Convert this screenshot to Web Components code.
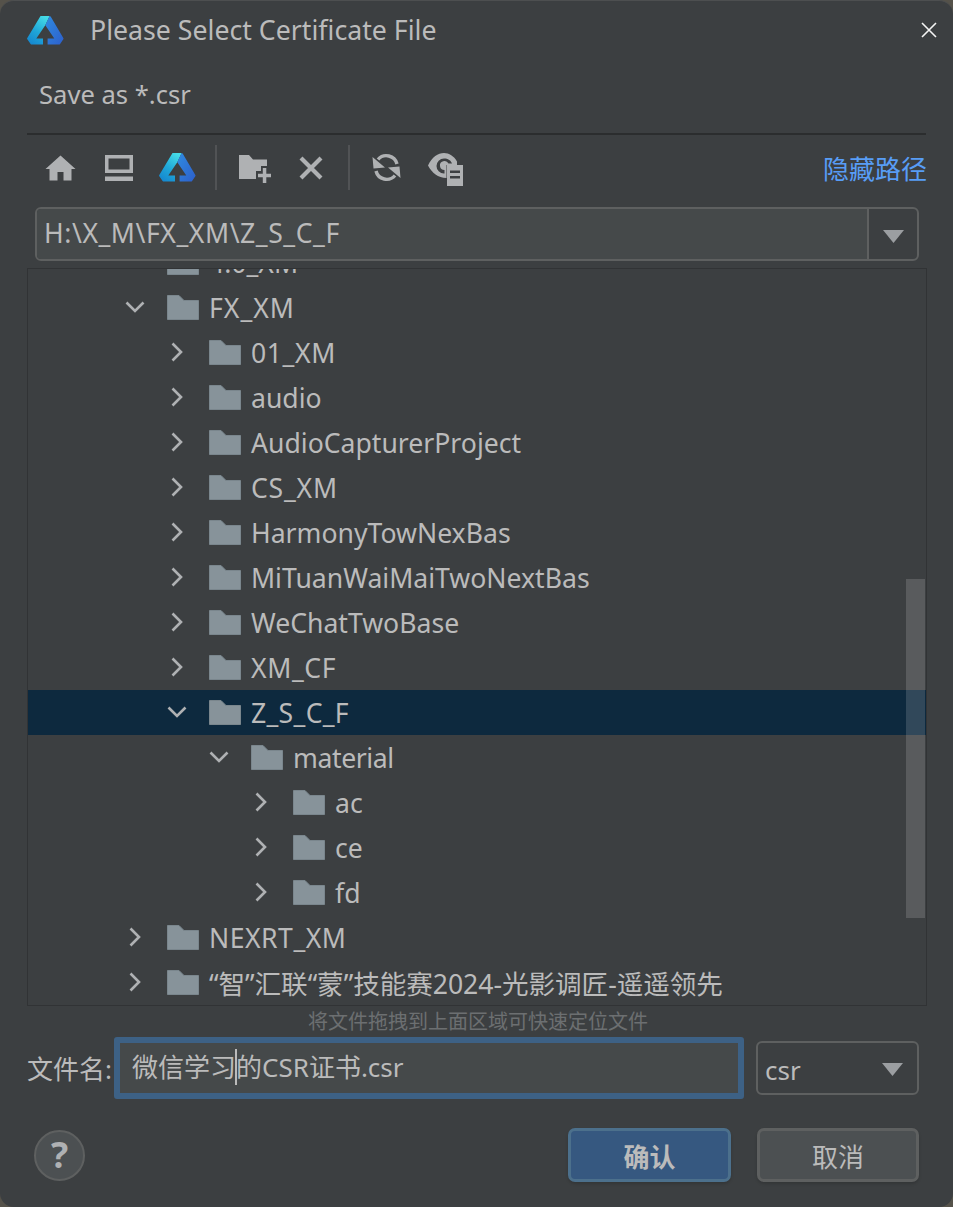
<!DOCTYPE html>
<html lang="zh"><head><meta charset="utf-8"><title>Please Select Certificate File</title>
<style>
html,body{margin:0;padding:0;background:#55524a;height:1207px;overflow:hidden}
body{font:26.6px "Noto Sans","Noto Sans CJK SC",sans-serif;color:#bbb}
</style></head><body>
<x-dialog>
  <x-title-bar slot="title">Please Select Certificate File</x-title-bar>
  <x-subtitle>Save as *.csr</x-subtitle>
  <x-toolbar></x-toolbar>
  <x-path-combo value="H:\X_M\FX_XM\Z_S_C_F"></x-path-combo>
  <x-tree>
    <x-row depth="1" open label="4.0_XM"></x-row>
    <x-row depth="1" open label="FX_XM" ls="1"></x-row>
    <x-row depth="2" label="01_XM" ls=".6"></x-row>
    <x-row depth="2" label="audio"></x-row>
    <x-row depth="2" label="AudioCapturerProject"></x-row>
    <x-row depth="2" label="CS_XM" ls=".8"></x-row>
    <x-row depth="2" label="HarmonyTowNexBas"></x-row>
    <x-row depth="2" label="MiTuanWaiMaiTwoNextBas"></x-row>
    <x-row depth="2" label="WeChatTwoBase"></x-row>
    <x-row depth="2" label="XM_CF" ls=".6"></x-row>
    <x-row depth="2" open selected label="Z_S_C_F" ls=".3"></x-row>
    <x-row depth="3" open label="material" ls="-.4"></x-row>
    <x-row depth="4" label="ac"></x-row>
    <x-row depth="4" label="ce"></x-row>
    <x-row depth="4" label="fd"></x-row>
    <x-row depth="1" label="NEXRT_XM" ls=".5"></x-row>
    <x-row depth="1" ls="-.05" label="“智”汇联“蒙”技能赛2024-光影调匠-遥遥领先"></x-row>
  </x-tree>
  <x-file-row></x-file-row>
  <x-footer></x-footer>
</x-dialog>
<script>
const LOGO=(id,w,h)=>`<svg width="${w}" height="${h}" viewBox="26.7 14.7 37 29" aria-hidden="true"><defs>
<linearGradient id="${id}a" x1="0.75" y1="0" x2="0.2" y2="1"><stop offset="0" stop-color="#45dbe6"/><stop offset=".55" stop-color="#1fa6d8"/><stop offset="1" stop-color="#1587cf"/></linearGradient>
<linearGradient id="${id}b" x1="0" y1="0" x2="1" y2="1"><stop offset="0" stop-color="#2f8be0"/><stop offset="1" stop-color="#2d5fcb"/></linearGradient></defs>
<path fill="url(#${id}a)" d="M40.2 14.7H49.3L45 24 36 37.3H42.7V43.3H31.4Q30.7 43.3 30.3 42.7L27 38Q26.5 37.3 27 36.6Z"/>
<path fill="url(#${id}b)" d="M49.3 14.7Q50 14.7 50.5 15.5L63 36.6Q63.5 37.3 63 38L59.8 42.7Q59.4 43.3 58.7 43.3H47.3V37.3H54L45 24Z"/></svg>`;
function def(name,css,html){
  customElements.define(name,class extends HTMLElement{
    constructor(){super();this.attachShadow({mode:'open'});}
    connectedCallback(){this.shadowRoot.innerHTML=`<style>${css}</style>${typeof html==='function'?html(this):html}`;}
  });
}
const ARROW=`<svg width="21" height="13" viewBox="0 0 21 13"><path fill="#9b9ea1" d="M0 0H21L10.500 13Z"/></svg>`;
def('x-dialog',`:host{display:flex;flex-direction:column;box-sizing:border-box;width:953px;height:1207px;background:#3c3f41;border-radius:14px;border-top:1px solid #4d4f50;overflow:hidden}`,`<slot name="title"></slot><slot></slot>`);
def('x-title-bar',`:host{display:flex;align-items:center;height:58px;padding:0 0 0 27px;flex:none}
.t{margin-left:26px;flex:1;font-size:26.7px;line-height:58px;white-space:nowrap}
button{all:unset;display:flex;margin-right:16px}`,
()=>`${LOGO('tl',37,29)}<span class="t"><slot></slot></span><button aria-label="Close"><svg width="16" height="16" viewBox="0 0 16 16"><path d="M1 1L15 15M15 1L1 15" stroke="#f4f4f4" stroke-width="1.6" fill="none"/></svg></button>`);
def('x-subtitle',`:host{display:block;flex:none;box-sizing:border-box;height:76px;margin:0 27px;padding:0 0 0 12px;line-height:71px;border-bottom:2px solid #2b2d2e;font-size:25.6px;white-space:nowrap}`,`<slot></slot>`);
def('x-toolbar',`:host{display:flex;align-items:center;box-sizing:border-box;flex:none;height:72px;padding-bottom:7px;margin:0 26px 0 27px}
svg{display:block;flex:none}
.s{width:2px;height:45px;background:#515355;flex:none}
.lnk{margin-left:auto;color:#589df6;font-family:"Noto Sans CJK SC",sans-serif;font-size:26px;line-height:65px;white-space:nowrap}`,
()=>`<svg style="margin-left:18px" width="31" height="26" viewBox="0 0 31 26"><path fill="#afb1b3" d="M15.500 0.500L30.500 14H26.500V25.500H18.500V17H12.500V25.500H4.500V14H0.500Z"/></svg>
<svg style="margin-left:29px" width="28" height="26" viewBox="0 0 28 26"><path fill="#afb1b3" fill-rule="evenodd" d="M0 0H28V18H0ZM3.500 3.500V14.500H24.500V3.500ZM0 21.500H28V26H0Z"/></svg>
<span style="margin-left:26px;display:flex">${LOGO('tb',37,29)}</span>
<span class="s" style="margin-left:19px"></span>
<svg style="margin-left:22px;margin-top:3px" width="32" height="28" viewBox="0 0 32 28"><path fill="#afb1b3" d="M0 0H10L14 4.500H28V11H22V16H17V24H0Z"/><path fill="#afb1b3" d="M23.800 13H27.300V18.800H32V22.200H27.300V28H23.800V22.200H19V18.800H23.800Z"/></svg>
<svg style="margin-left:28px" width="24" height="24" viewBox="0 0 24 24"><path d="M2 2L22 22M22 2L2 22" stroke="#afb1b3" stroke-width="4.200" fill="none"/></svg>
<span class="s" style="margin-left:25px"></span>
<svg style="margin-left:22px" width="29" height="29" viewBox="0 0 29 29"><path fill="none" stroke="#afb1b3" stroke-width="3.400" d="M6 6.500A11 11 0 0 1 25 11"/><path fill="#afb1b3" d="M0.500 4L1.500 15.500L13 14.500Z"/><path fill="none" stroke="#afb1b3" stroke-width="3.400" d="M23 22.500A11 11 0 0 1 4 18"/><path fill="#afb1b3" d="M28.500 25L27.500 13.500L16 14.500Z"/></svg>
<svg style="margin-left:27px;margin-top:3px" width="35" height="33" viewBox="0 0 35 33"><path fill="#afb1b3" fill-rule="evenodd" d="M0 12.500C4 4 10 0 16 0 21 0 26 3 29 8.500V12H18.500V25C10 25 4 20 0 12.500ZM16 5.500A7.500 7.500 0 0 0 16 20.500H16.500V17A4.500 4.500 0 1 1 20.500 10.500H24C23 7.500 20 5.500 16 5.500Z"/><path fill="#afb1b3" fill-rule="evenodd" d="M19 12H35V33H19ZM22 17.500V20H32V17.500ZM22 23V25.500H32V23Z"/></svg>
<span class="lnk">隐藏路径</span>`);
def('x-path-combo',`:host{display:flex;flex:none;box-sizing:border-box;height:54px;margin:0 34px 0 35px;border:2px solid #5e6060;border-radius:6px;overflow:hidden}
.v{flex:1;background:#45494a;padding-left:7px;line-height:48px;font-size:26.6px;letter-spacing:.55px;white-space:nowrap}
.b{width:48px;border-left:2px solid #5e6060;display:flex;align-items:center;justify-content:center;padding-top:4px}`,
h=>`<div class="v">${h.getAttribute('value')}</div><div class="b">${ARROW}</div>`);
def('x-tree',`:host{display:block;flex:none;position:relative;box-sizing:border-box;height:738px;margin:7px 26px 0 27px;border:1px solid #313335;overflow:hidden}
.in{margin-top:-29px}
.sb{position:absolute;right:1px;top:310px;width:19px;height:339px;background:rgba(255,255,255,.15)}`,
`<div class="in"><slot></slot></div><div class="sb"></div>`);
def('x-row',`:host{display:flex;align-items:center;height:45px;white-space:nowrap;font-size:26.6px}
:host([selected]){background:#0d293e}
.c{width:42px;margin-right:11px;margin-bottom:2px;display:flex;justify-content:center;flex:none}
svg{display:block;flex:none}
.l{margin-left:10px}`,
h=>{const d=+h.getAttribute('depth'),o=h.hasAttribute('open'),ls=h.getAttribute('ls');
return `<span style="width:${d*42+97}px;flex:none;display:flex;justify-content:flex-end"><span class="c">${o?'<svg width="20" height="12" viewBox="0 0 20 12"><path d="M1.500 1.500L10 10L18.500 1.500" stroke="#afb1b3" stroke-width="2.600" fill="none"/></svg>':'<svg width="12" height="20" viewBox="0 0 12 20"><path d="M1.500 1.500L10 10L1.500 18.500" stroke="#afb1b3" stroke-width="2.600" fill="none"/></svg>'}</span></span>
<svg width="32" height="25" viewBox="0 0 32 25"><path fill="#87939a" stroke="#7a868d" d="M.5.5H12L17 5.500H31.500V24.500H.5Z"/></svg><span class="l" style="${ls?`letter-spacing:${ls}px`:''}">${h.getAttribute('label')}</span>`});
def('x-file-row',`:host{display:block;flex:none;margin:0 34px 0 27px;font-size:26px}
.h{text-align:center;color:#6c6f71;font-size:20px;line-height:30px;height:31px;padding-left:10px;font-family:"Noto Sans CJK SC",sans-serif}
.r{display:flex;align-items:center}
.lb{width:87px;flex:none;white-space:nowrap}
.i{box-sizing:border-box;width:630px;height:62px;border:6px solid #3d6185;border-radius:3px;background:#45494a;padding-left:12px;line-height:48px;white-space:nowrap;flex:none}
.car{border-left:2px solid #bbb;margin:0 -1px}
.cb{box-sizing:border-box;margin-left:12px;width:163px;height:54px;border:2px solid #5e6060;border-radius:6px;display:flex;align-items:center;justify-content:space-between;padding:3px 14px 0 7px;line-height:46px}`,
`<div class="h">将文件拖拽到上面区域可快速定位文件</div><div class="r"><span class="lb">文件名:</span><div class="i">微信学习<span class="car"></span>的CSR证书.csr</div><div class="cb"><span>csr</span>${ARROW}</div></div>`);
def('x-footer',`:host{display:flex;align-items:center;flex:none;margin:29px 34px 0 34px}
.q{box-sizing:border-box;width:51px;height:51px;border-radius:50%;background:#4c5052;border:2px solid #5e6060;color:#afb1b3;font-weight:700;font-size:36px;line-height:46px;text-align:center}
button{all:unset;box-sizing:border-box;width:162px;height:54px;border-radius:7px;text-align:center;font:26px/50px "Noto Sans CJK SC",sans-serif;color:#bbb;border:3px solid #5e6060;background:#4c5052;box-shadow:0 2px 3px rgba(0,0,0,.15)}
.ok{margin-left:auto;width:163px;background:#365880;border-color:#4c708c;font-weight:700}
.no{margin-left:26px}`,
`<div class="q">?</div><button class="ok">确认</button><button class="no">取消</button>`);
</script></body></html>
